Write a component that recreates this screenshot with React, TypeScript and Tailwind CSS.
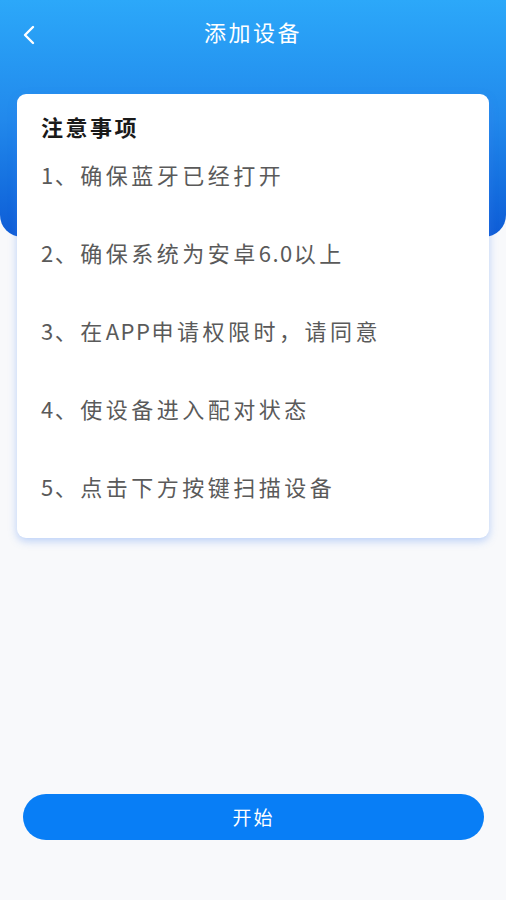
import React from "react";

const items = [
  "1、确保蓝牙已经打开",
  "2、确保系统为安卓6.0以上",
  "3、在APP申请权限时，请同意",
  "4、使设备进入配对状态",
  "5、点击下方按键扫描设备",
];

function Runs({ text }: { text: string }) {
  const parts = text.split(/([\x00-\x7F]+)/).filter((p) => p.length > 0);
  return (
    <>
      {parts.map((p, i) =>
        /^[\x00-\x7F]+$/.test(p) ? (
          <span key={i} className="tracking-[1.5px]">
            {p}
          </span>
        ) : (
          <span key={i} className="tracking-[3.5px]">
            {p}
          </span>
        )
      )}
    </>
  );
}

export default function App() {
  return (
    <div
      className="relative w-[506px] h-[900px] bg-[#f8f9fb] overflow-hidden"
      style={{ fontFamily: '"Noto Sans CJK SC", "Noto Sans", sans-serif' }}
    >
      <div className="absolute left-0 top-0 w-full h-[237px] rounded-b-[22px] bg-gradient-to-b from-[#2ca8f9] via-[#2289ec] to-[#0f5cd6]" />
      <div className="relative">
        <div className="flex items-center h-[68px] relative">
          <div className="absolute left-[19px] top-[24px]">
            <svg width="22" height="22" viewBox="0 0 22 22" fill="none">
              <path d="M14 3 L6 11 L14 19" stroke="white" strokeWidth="2.4" strokeLinecap="round" strokeLinejoin="round" />
            </svg>
          </div>
          <div className="w-full text-center text-white text-[22px] tracking-[2.5px] leading-none -mt-[6px]">添加设备</div>
        </div>
        <div className="mx-[17px] mt-[26px] h-[444px] bg-white rounded-[9px] shadow-[0_3px_8px_rgba(70,130,240,0.35)] pl-[24px] pt-[20px]">
          <div className="text-[22px] font-bold text-[#1a1a1a] leading-[24px] tracking-[2.5px]">注意事项</div>
          <div className="flex flex-col gap-[54px] mt-[24px]">
            {items.map((t) => (
              <div key={t} className="text-[22px] text-[#5a5a5a] leading-[24px]">
                <Runs text={t} />
              </div>
            ))}
          </div>
        </div>
      </div>
      <div className="absolute left-[23px] right-[22px] top-[794px] h-[46px] rounded-full bg-[#087ef6] flex items-center justify-center text-white text-[19px] tracking-[2px]">
        开始
      </div>
    </div>
  );
}
